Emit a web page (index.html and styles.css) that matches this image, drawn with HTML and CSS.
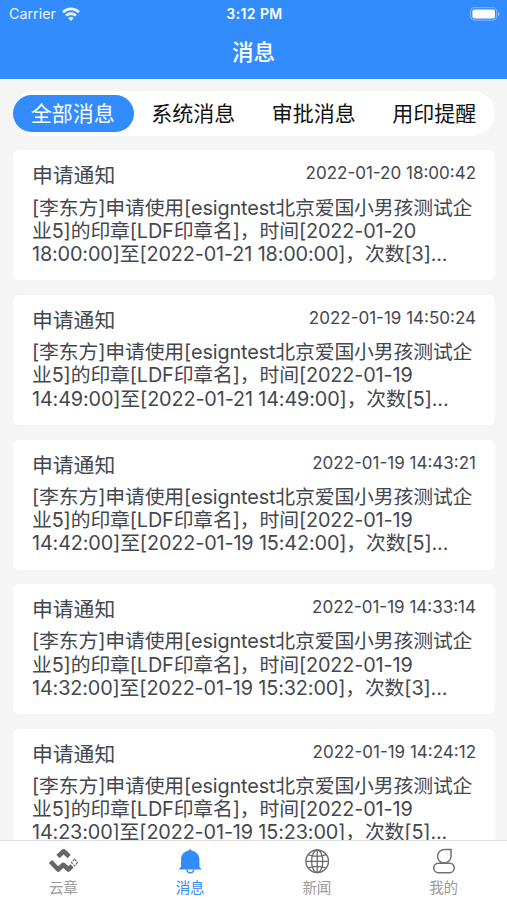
FILE: index.html
```html
<!DOCTYPE html>
<html lang="zh-CN">
<head>
  <meta charset="UTF-8" />
  <meta name="viewport" content="width=device-width, initial-scale=1.0"/>
  <title>消息</title>
  <link rel="stylesheet" href="styles.css">
</head>
<body>

  <header>
    <div class="status-bar">
      <div class="carrier">
        <span>Carrier</span>
        <svg class="wifi" viewBox="0 0 18 14" fill="none" stroke="#fff" stroke-width="2.6">
          <path d="M1 5.2a11.4 11.4 0 0 1 16 0"/>
          <path d="M4 8.6a7.2 7.2 0 0 1 10 0"/>
          <path d="M9 14l-2.8-2.9a3.9 3.9 0 0 1 5.6 0z" fill="#fff" stroke="none"/>
        </svg>
      </div>
      <span class="clock">3:12 PM</span>
      <svg class="battery" viewBox="0 0 30 14">
        <rect x="0.6" y="0.6" width="26" height="12.6" rx="4" fill="none" stroke="#fff" stroke-opacity="0.4"/>
        <rect x="2.4" y="2.4" width="22.6" height="9" rx="2.2" fill="#fff"/>
        <path d="M28 4.8c2 .8 2 3.6 0 4.4z" fill="#fff" fill-opacity="0.5"/>
      </svg>
    </div>
    <h1>消息</h1>
  </header>

  <main>
    <nav class="tabs">
      <button class="tab active">全部消息</button>
      <button class="tab">系统消息</button>
      <button class="tab">审批消息</button>
      <button class="tab">用印提醒</button>
    </nav>

    <section class="message-list">
      <article class="message">
        <div class="message-head"><h2>申请通知</h2><time>2022-01-20 18:00:42</time></div>
        <p>[李东方]申请使用[esigntest北京爱国小男孩测试企<br>业5]的印章[LDF印章名]，时间[2022-01-20<br>18:00:00]至[2022-01-21 18:00:00]，次数[3]...</p>
      </article>
      <article class="message">
        <div class="message-head"><h2>申请通知</h2><time>2022-01-19 14:50:24</time></div>
        <p>[李东方]申请使用[esigntest北京爱国小男孩测试企<br>业5]的印章[LDF印章名]，时间[2022-01-19<br>14:49:00]至[2022-01-21 14:49:00]，次数[5]...</p>
      </article>
      <article class="message">
        <div class="message-head"><h2>申请通知</h2><time>2022-01-19 14:43:21</time></div>
        <p>[李东方]申请使用[esigntest北京爱国小男孩测试企<br>业5]的印章[LDF印章名]，时间[2022-01-19<br>14:42:00]至[2022-01-19 15:42:00]，次数[5]...</p>
      </article>
      <article class="message">
        <div class="message-head"><h2>申请通知</h2><time>2022-01-19 14:33:14</time></div>
        <p>[李东方]申请使用[esigntest北京爱国小男孩测试企<br>业5]的印章[LDF印章名]，时间[2022-01-19<br>14:32:00]至[2022-01-19 15:32:00]，次数[3]...</p>
      </article>
      <article class="message">
        <div class="message-head"><h2>申请通知</h2><time>2022-01-19 14:24:12</time></div>
        <p>[李东方]申请使用[esigntest北京爱国小男孩测试企<br>业5]的印章[LDF印章名]，时间[2022-01-19<br>14:23:00]至[2022-01-19 15:23:00]，次数[5]...</p>
      </article>
    </section>
  </main>

  <footer>
    <a class="nav-item">
      <svg viewBox="0 0 30 28" fill="none" stroke="#666" stroke-width="4.6" stroke-linejoin="round">
        <path d="M10 9.5l5.600-5.200 5.600 5.200"/>
        <path d="M2.500 14.500l7.700 8 5.100-4.700 5.100 4.700 3.600-3.700"/>
        <path d="M26.500 12.200l3 3.300-3 3.300-3-3.300z" fill="#fff" stroke="#777" stroke-width="1.2" stroke-dasharray="3 .8"/>
      </svg>
      <span>云章</span>
    </a>
    <a class="nav-item active">
      <svg viewBox="0 0 30 28">
        <path d="M13.8 3.600a1.300 1.300 0 0 1 2.600 0c4.600.8 8 4.200 8 8.800v7.400l2.300 2.800H3.700l2.300-2.800v-7.400c0-4.600 3.200-8 7.800-8.800z" fill="#328cfd"/>
        <path d="M12 22.500c0 4.300 6.600 4.300 6.600 0" fill="none" stroke="#328cfd" stroke-width="1.4"/>
      </svg>
      <span>消息</span>
    </a>
    <a class="nav-item">
      <svg viewBox="0 0 30 28" fill="none" stroke="#6b6b6b" stroke-width="1.3">
        <circle cx="15.2" cy="14.3" r="11.3"/>
        <ellipse cx="15.2" cy="14.3" rx="5.6" ry="11.3"/>
        <path d="M15.2 3v22.6M3.9 14.3h22.6M6 7.6c5.4 2 13 2 18.4 0M6 21c5.4-2 13-2 18.4 0"/>
      </svg>
      <span>新闻</span>
    </a>
    <a class="nav-item">
      <svg viewBox="0 0 30 28" fill="none" stroke="#707070" stroke-width="1.5">
        <path d="M22 2.5h-6.400c-4.100 0-7.100 2.900-7.100 6.700s3 6.800 6.700 6.800S22 13.100 22 9.300z"/>
        <rect x="4.700" y="16.200" width="20.600" height="9.500" rx="4.700"/>
      </svg>
      <span>我的</span>
    </a>
  </footer>

</body>
</html>
```
FILE: styles.css
```css
* {
  box-sizing: border-box;
  margin: 0;
  padding: 0;
  font-family: Inter, 'Noto Sans CJK SC', sans-serif;
}

body {
  display: flex;
  flex-direction: column;
  height: 100vh;
  overflow: hidden;
  background-color: #f5f5f5;
}

header {
  flex: none;
  height: 79px;
  background-color: #328cfd;
  color: white;
}

.status-bar {
  display: grid;
  grid-template-columns: 1fr auto 1fr;
  align-items: center;
  height: 27px;
  padding: 0 7px 0 9px;
  font-size: 14.3px;
}

.carrier {
  display: flex;
  align-items: center;
  gap: 6px;
  opacity: 0.9;
}

.wifi {
  width: 18px;
  height: 14px;
}

.clock {
  font-size: 14px;
  font-weight: 600;
  letter-spacing: 0.4px;
}

.battery {
  justify-self: end;
  width: 30px;
  height: 14px;
}

h1 {
  font-size: 21.5px;
  font-weight: 500;
  line-height: 50px;
  text-align: center;
}

main {
  flex: 1;
  min-height: 0;
  overflow: hidden;
  padding: 12px 12px 0 13px;
}

.tabs {
  display: grid;
  grid-template-columns: repeat(4, 1fr);
  align-items: center;
  height: 45px;
  border-radius: 23px;
  background-color: white;
}

.tab {
  height: 37px;
  padding-right: 1px;
  border: none;
  border-radius: 19px;
  background: none;
  color: #111;
  font-size: 21px;
  line-height: 37px;
  white-space: nowrap;
}

.tab.active {
  background-color: #328cfd;
  color: white;
}

.message-list {
  display: flex;
  flex-direction: column;
  gap: 14.6px;
  margin-top: 14.4px;
}

.message {
  flex: none;
  height: 130px;
  padding: 11px 19px;
  border-radius: 6px;
  background-color: white;
  color: #43484e;
}

.message-head {
  display: flex;
  justify-content: space-between;
  height: 35.3px;
}

h2 {
  font-size: 20.8px;
  font-weight: 400;
  line-height: 30px;
}

time {
  font-size: 17px;
  line-height: 24px;
}

.message p {
  font-size: 19.85px;
  line-height: 23.2px;
  letter-spacing: -0.15px;
  white-space: nowrap;
}

footer {
  flex: none;
  display: grid;
  grid-template-columns: repeat(4, 1fr);
  height: 60px;
  border-top: 1px solid #dedede;
  background-color: white;
}

.nav-item {
  display: flex;
  flex-direction: column;
  align-items: center;
  padding-top: 6px;
  color: #9a9a9a;
  font-size: 14.5px;
  line-height: 26px;
}

.nav-item svg {
  width: 30px;
  height: 28px;
}

.nav-item.active {
  color: #328cfd;
}
```
